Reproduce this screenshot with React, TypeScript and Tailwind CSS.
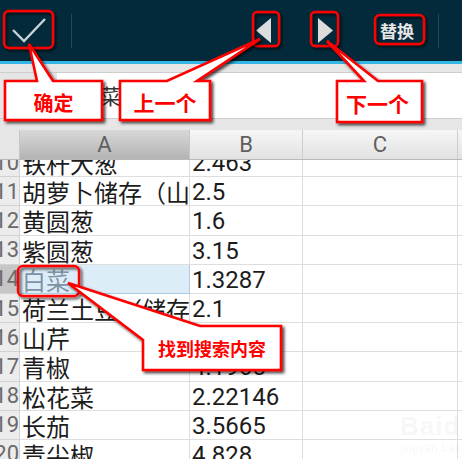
const rows = [
  { n: "10", a: "铁杆大葱", b: "2.463" },
  { n: "11", a: "胡萝卜储存（山", b: "2.5" },
  { n: "12", a: "黄圆葱", b: "1.6" },
  { n: "13", a: "紫圆葱", b: "3.15" },
  { n: "14", a: "白菜", b: "1.3287", hit: true },
  { n: "15", a: "荷兰土豆（储存", b: "2.1" },
  { n: "16", a: "山芹", b: "3.8" },
  { n: "17", a: "青椒", b: "4.1965" },
  { n: "18", a: "松花菜", b: "2.22146" },
  { n: "19", a: "长茄", b: "3.5665" },
  { n: "20", a: "青尖椒", b: "4.828" },
];

function TopBar() {
  return (
    <div className="h-[61px] bg-[#032a3b] flex items-center">
      <div className="ml-[11px] w-[36px] h-[26px]">
        <svg width="36" height="26" viewBox="0 0 36 26">
          <polyline points="2,12 13,23 34,1" fill="none" stroke="#c9d2d6" strokeWidth="2.4" />
        </svg>
      </div>
      <div className="ml-[24px] w-px h-[34px] bg-[#1d4a5c]" />
      <div className="ml-[184px] w-[15px] h-[26px]">
        <svg width="15" height="26" viewBox="0 0 15 26">
          <polygon points="0,12.5 15,0 15,25" fill="#dcdcdc" />
        </svg>
      </div>
      <div className="ml-[47px] w-[15px] h-[26px]">
        <svg width="15" height="26" viewBox="0 0 15 26">
          <polygon points="0,0 0,25 15,12.5" fill="#dcdcdc" />
        </svg>
      </div>
      <div className="ml-[47px] text-[17px] font-bold text-[#e6e6e6] font-['Noto_Sans_CJK_SC',sans-serif]">
        替换
      </div>
      <div className="ml-[24px] w-px h-[34px] bg-[#1d4a5c]" />
    </div>
  );
}

function SearchBar() {
  return (
    <div className="h-[66px] bg-[#e6e6e6] flex flex-col">
      <div className="h-[9px] border-b border-[#cdcdcd]" />
      <div className="h-[45px] flex">
        <div className="w-[57px]" />
        <div className="flex-1 bg-white flex items-center pl-[22px] text-[21px] text-[#333] font-['Noto_Sans_CJK_SC',sans-serif]">
          白菜
        </div>
      </div>
      <div className="h-[12px] border-t border-[#cdcdcd]" />
    </div>
  );
}

function Sheet() {
  return (
    <div>
      <div className="h-[30px] flex border-b border-[#b9b9b9] text-[22px] text-[#5f5f5f]">
        <div className="w-[20px] bg-[#e6e6e6] border-r border-[#c6c6c6]" />
        <div className="w-[170px] bg-linear-to-b from-[#d8d8d8] to-[#b4b4b4] border-r border-[#c6c6c6] flex items-center justify-center">
          A
        </div>
        <div className="w-[113px] bg-linear-to-b from-[#f6f6f6] to-[#e2e2e2] border-r border-[#cdcdcd] flex items-center justify-center">
          B
        </div>
        <div className="w-[155px] bg-linear-to-b from-[#f6f6f6] to-[#e2e2e2] border-r border-[#cdcdcd] flex items-center justify-center">
          C
        </div>
        <div className="flex-1 bg-linear-to-b from-[#f6f6f6] to-[#e2e2e2]" />
      </div>
      <div className="h-[299px] overflow-hidden">
        <div className="-mt-[12px]">
          {rows.map((r) => (
            <div key={r.n} className="h-[29.2px] flex">
              <div
                className={`w-[20px] shrink-0 flex justify-end items-center overflow-hidden border-r border-b border-[#d2d2d2] text-[22px] text-[#6a6a6a] ${
                  r.hit ? "bg-[#c6c6c6]" : "bg-[#ececec]"
                }`}
              >
                <span className="whitespace-nowrap">{r.n}</span>
              </div>
              <div
                className={`w-[170px] shrink-0 overflow-hidden whitespace-nowrap pl-[2px] text-[24px] leading-[30px] font-['Noto_Sans_CJK_SC',sans-serif] border-r border-b ${
                  r.hit
                    ? "bg-[#ddedf8] border-[#a9cbe3] text-[#7d93a3]"
                    : "border-[#dedede] text-[#1c1c1c]"
                }`}
              >
                {r.a}
              </div>
              <div className="w-[113px] shrink-0 overflow-hidden whitespace-nowrap pl-[2px] text-[24px] leading-[30px] text-[#1c1c1c] border-r border-b border-[#dedede]">
                {r.b}
              </div>
              <div className="w-[155px] shrink-0 border-r border-b border-[#dedede]" />
              <div className="flex-1 border-b border-[#dedede]" />
            </div>
          ))}
        </div>
      </div>
    </div>
  );
}

function Annotations() {
  const red = "#ff0000";
  return (
    <>
      <svg className="absolute left-0 top-0 pointer-events-none" width="462" height="459" viewBox="0 0 462 459">
        <defs>
          <filter id="sh" x="-20%" y="-20%" width="140%" height="140%">
            <feDropShadow dx="2" dy="2" stdDeviation="1.4" floodColor="#000" floodOpacity="0.75" />
          </filter>
        </defs>
        <g fill="none" stroke={red} strokeWidth="2.4" filter="url(#sh)">
          <rect x="4" y="11" width="49" height="37" rx="5" />
          <rect x="253" y="12" width="26" height="34" rx="4" />
          <rect x="311" y="12" width="27" height="34" rx="4" />
          <rect x="375" y="15" width="49" height="29" rx="5" />
          <rect x="18" y="266" width="61" height="30" rx="5" />
        </g>
        <g fill="#fff" stroke={red} strokeWidth="2.6" strokeLinejoin="miter" filter="url(#sh)">
          <path d="M5,81 L37,81 L29,44 L53,81 L102,81 L102,120 L5,120 Z" />
          <path d="M120,81 L167,81 L260,39 L197,81 L210,81 L210,120 L120,120 Z" />
          <path d="M337,81 L364,81 L327,41 L378,81 L422,81 L422,122 L337,122 Z" />
          <path d="M68,283 L200,326 L281,326 L281,370 L143,370 L143,340 Z" />
        </g>
      </svg>
      <div className="absolute left-[5px] top-[81px] w-[97px] h-[39px] flex items-center justify-center pt-[4px] text-[20px] font-bold text-[#ff0000] font-['Noto_Sans_CJK_SC',sans-serif]">
        确定
      </div>
      <div className="absolute left-[120px] top-[81px] w-[90px] h-[39px] flex items-center justify-center pt-[4px] text-[21px] font-bold text-[#ff0000] font-['Noto_Sans_CJK_SC',sans-serif]">
        上一个
      </div>
      <div className="absolute left-[337px] top-[81px] w-[85px] h-[41px] flex items-center justify-center pt-[5px] pr-[4px] text-[21px] font-bold text-[#ff0000] font-['Noto_Sans_CJK_SC',sans-serif]">
        下一个
      </div>
      <div className="absolute left-[143px] top-[326px] w-[138px] h-[44px] flex items-center justify-center text-[18px] font-bold text-[#ff0000] font-['Noto_Sans_CJK_SC',sans-serif]">
        找到搜索内容
      </div>
    </>
  );
}

function Watermark() {
  return (
    <div className="absolute left-[400px] top-[412px] pointer-events-none text-[#000]/[0.05] font-['Liberation_Sans',sans-serif]">
      <div className="text-[26px] font-bold leading-[28px] tracking-[1px]">Baidu</div>
      <div className="text-[12px] leading-[16px]">jingyan.baidu.com</div>
    </div>
  );
}

export default function App() {
  return (
    <div className="relative w-[462px] h-[459px] overflow-hidden bg-white font-['Roboto','Noto_Sans_CJK_SC',sans-serif]">
      <TopBar />
      <div className="h-[3px] bg-[#33b5e5]" />
      <SearchBar />
      <Sheet />
      <Annotations />
      <Watermark />
    </div>
  );
}
